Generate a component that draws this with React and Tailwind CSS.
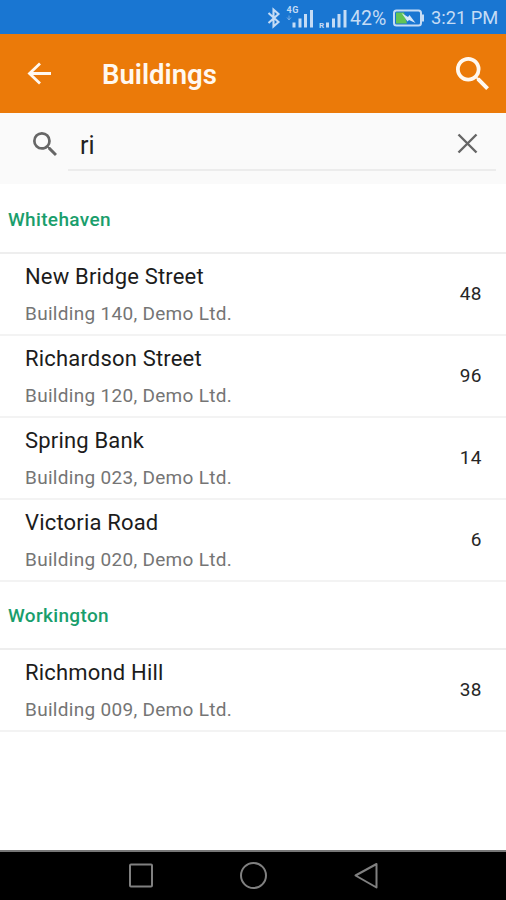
import React, { useState } from 'react'

const sections = [
    {
        town: 'Whitehaven',
        buildings: [
            { name: 'New Bridge Street', code: '140', count: 48 },
            { name: 'Richardson Street', code: '120', count: 96 },
            { name: 'Spring Bank', code: '023', count: 14 },
            { name: 'Victoria Road', code: '020', count: 6 },
        ],
    },
    {
        town: 'Workington',
        buildings: [
            { name: 'Richmond Hill', code: '009', count: 38 },
        ],
    },
]

const SearchIcon = ({ className }) => (
    <svg viewBox="3 3 17.5 17.5" fill="currentColor" className={className}>
        <path d="M15.5 14h-.79l-.28-.27A6.47 6.47 0 0 0 16 9.5 6.5 6.5 0 1 0 9.5 16c1.61 0 3.09-.59 4.23-1.57l.27.28v.79l5 4.99L20.49 19l-4.99-5zm-6 0C7.01 14 5 11.99 5 9.5S7.01 5 9.5 5 14 7.01 14 9.5 11.99 14 9.5 14z" />
    </svg>
)

const StatusBar = () => (
    <div className="flex h-[34px] items-center justify-end bg-[#1976d2] pt-[2px] pr-[7px] text-[#c5dcf5]">
        <svg width="84" height="24" viewBox="0 0 84 24" fill="none">
            {/* bluetooth */}
            <path d="M2.500 7l10 9-5 4.500v-17l5 4.500-10 9" stroke="currentColor" strokeWidth="2.100" />
            {/* first sim */}
            <text x="20.500" y="7" fontSize="9" fontWeight="700" fill="currentColor" fontFamily="Roboto, sans-serif" textLength="12">4G</text>
            <path d="M23 9.500v4M21 11.500l2 2.500 2-2.500" stroke="currentColor" strokeWidth="1" opacity=".5" />
            <path d="M28 16.500v5M34 12.500v9M39.500 8v13.500M45.500 4v17.500" stroke="currentColor" strokeWidth="3" />
            {/* second sim */}
            <text x="53" y="22" fontSize="8" fontWeight="700" fill="currentColor" fontFamily="Roboto, sans-serif">R</text>
            <path d="M61.500 16.500v5M67.500 12.500v9M73 8v13.500M79 4v17.500" stroke="currentColor" strokeWidth="3" />
        </svg>
        <span className="w-[38px] pt-px text-[19.5px] leading-none">42%</span>
        <svg width="33" height="20" viewBox="0 0 33 20" fill="none" className="mr-[6px] ml-[4px]">
            <rect x="2" y="2.500" width="27" height="15" rx="2.500" stroke="currentColor" strokeWidth="2" />
            <path d="M31 6.500v7" stroke="currentColor" strokeWidth="2" />
            <path d="M4 4.500h8l3 11H4z" fill="#62c454" />
            <path d="M9.500 5l6.500 4 1.500-2L23.500 15l-6.500-3-1.500 1.500z" fill="#d5e8fa" />
        </svg>
        <span className="w-[68px] pt-px text-[18.3px] leading-none whitespace-nowrap">3:21 PM</span>
    </div>
)

const BuildingRow = ({ building }) => (
    <li className="flex h-[82px] items-center justify-between border-b-2 border-[#f3f3f3] pt-[2px] pr-6 pl-[25px]">
        <div>
            <h3 className="text-[22px] leading-[30px] tracking-[0.18px] text-[#1c1c1c]">{building.name}</h3>
            <p className="mt-[9px] text-[19px] leading-[26px] tracking-[0.3px] text-[#757575]">
                Building {building.code}, Demo Ltd.
            </p>
        </div>
        <span className="text-[19px] tracking-[0.5px] text-[#262626]">{building.count}</span>
    </li>
)

const NavBar = () => (
    <nav className="flex h-[50px] items-center justify-between border-t-2 border-[#777] bg-black px-[127px] text-[#808080]">
        <svg width="28" height="28" viewBox="0 0 28 28" fill="none" stroke="currentColor" strokeWidth="2">
            <rect x="3" y="2.500" width="22" height="22" rx="1" />
        </svg>
        <svg width="28" height="28" viewBox="0 0 28 28" fill="none" stroke="currentColor" strokeWidth="2">
            <circle cx="14.500" cy="13.500" r="12.500" />
        </svg>
        <svg width="28" height="28" viewBox="0 0 28 28" fill="none" stroke="currentColor" strokeWidth="2" strokeLinejoin="round">
            <path d="M25.500 2v23.500L4.500 13.500z" />
        </svg>
    </nav>
)

const App = () => {
    const [query, setQuery] = useState('ri')

    return (
        <div className="flex h-[900px] w-[506px] flex-col overflow-hidden bg-white font-[Roboto,sans-serif]">
            <StatusBar />

            <header className="flex h-[79px] items-center bg-[#eb7a09] pr-[17px] pl-[27px] text-[#fff8f0]">
                <button aria-label="Back">
                    <svg width="25" height="24" viewBox="0 0 25 24" fill="none" stroke="currentColor" strokeWidth="2.800" className="block">
                        <path d="M13 1.500L2.500 11.500 13 21.500M2.500 11.500H24" />
                    </svg>
                </button>
                <h1 className="ml-[50px] flex-1 pt-[3px] text-[27.5px] font-semibold">Buildings</h1>
                <button aria-label="Search">
                    <SearchIcon className="block size-[33px]" />
                </button>
            </header>

            <div className="flex h-[71px] items-start bg-[#fafafa] pr-[10px] pl-[33px] text-[#666]">
                <SearchIcon className="mt-[19px] size-[24px]" />
                <div className="ml-[11px] flex h-[58px] flex-1 items-center border-b-2 border-[#ececec] pr-[18px] pl-3">
                    <input
                        value={query}
                        onChange={(e) => setQuery(e.target.value)}
                        className="min-w-0 flex-1 pt-[9px] text-[25px] text-[#222] outline-none"
                    />
                    <button aria-label="Clear" onClick={() => setQuery('')}>
                        <svg width="21" height="21" viewBox="0 0 21 21" fill="none" stroke="currentColor" strokeWidth="2.400" className="mt-[5px] block">
                            <path d="M1.500 1.500l18 18M19.500 1.500l-18 18" />
                        </svg>
                    </button>
                </div>
            </div>

            <main className="flex-1">
                {sections.map((section) => (
                    <section key={section.town} className="group">
                        <h2 className="flex h-[68px] items-center border-b-2 border-[#eee] pt-[4px] pl-2 text-[19px] font-medium tracking-[0.35px] text-[#1a9e6c] group-first:h-[69.5px] group-first:pt-[5px]">
                            {section.town}
                        </h2>
                        <ul>
                            {section.buildings.map((building) => (
                                <BuildingRow key={building.code} building={building} />
                            ))}
                        </ul>
                    </section>
                ))}
            </main>

            <NavBar />
        </div>
    )
}

export default App
